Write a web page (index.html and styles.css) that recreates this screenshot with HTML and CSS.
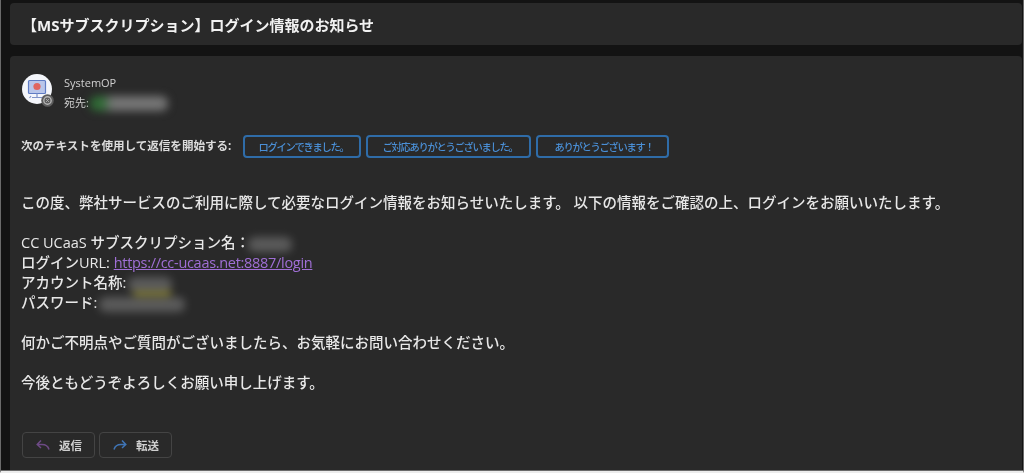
FILE: index.html
```html
<!DOCTYPE html>
<html lang="ja">
<head>
    <meta charset="UTF-8">
    <meta name="viewport" content="width=device-width, initial-scale=1.0">
    <title>ログイン情報のお知らせ</title>
    <link rel="stylesheet" href="styles.css">
</head>
<body>
    <div class="frame">
        <div class="subject-card">
            <h1 class="subject">【MSサブスクリプション】ログイン情報のお知らせ</h1>
        </div>

        <div class="mail-card">
            <div class="sender">
                <div class="avatar">
                    <svg width="30" height="30" viewBox="0 0 30 30">
                        <circle cx="15" cy="15" r="15" fill="#f4f6fb"/>
                        <rect x="6.5" y="6.5" width="17" height="13" rx="1" fill="#b9c6ea" stroke="#5f7cc4" stroke-width="1.2"/>
                        <circle cx="15" cy="12.5" r="3.6" fill="#e0655f"/>
                        <path d="M15 19.5v3.5M10 23.5h10M9 22l-1.5 2M21 22l1.5 2" stroke="#7f93c8" stroke-width="1.2" fill="none"/>
                    </svg>
                    <span class="status-badge">
                        <svg width="13" height="13" viewBox="0 0 12 12">
                            <circle cx="6" cy="6" r="5.8" fill="#5d5d5d"/>
                            <circle cx="6" cy="6" r="3.4" fill="none" stroke="#b4b4b4" stroke-width="1.3"/>
                            <path d="M4.6 4.6l2.8 2.8M7.4 4.6L4.6 7.4" stroke="#b4b4b4" stroke-width=".8"/>
                        </svg>
                    </span>
                </div>
                <div class="sender-text">
                    <div class="sender-name">SystemOP</div>
                    <div class="sender-to">宛先: <span class="redact redact-to"></span></div>
                </div>
            </div>

            <div class="quick-replies">
                <span class="quick-label">次のテキストを使用して返信を開始する:</span>
                <button class="quick-btn btn-a">ログインできました。</button>
                <button class="quick-btn btn-b">ご対応ありがとうございました。</button>
                <button class="quick-btn btn-c">ありがとうございます！</button>
            </div>

            <div class="mail-body">
                <p>この度、弊社サービスのご利用に際して必要なログイン情報をお知らせいたします。 以下の情報をご確認の上、ログインをお願いいたします。</p>
                <p>
                    CC UCaaS サブスクリプション名：<span class="redact redact-plan"></span><br>
                    ログインURL: <a href="#">https://cc-ucaas.net:8887/login</a><br>
                    アカウント名称: <span class="redact redact-account"></span><br>
                    パスワード: <span class="redact redact-pass"></span>
                </p>
                <p>何かご不明点やご質問がございましたら、お気軽にお問い合わせください。</p>
                <p>今後ともどうぞよろしくお願い申し上げます。</p>
            </div>

            <div class="actions">
                <button class="action-btn">
                    <svg width="16" height="14" viewBox="0 0 16 14"><path d="M14 11.5C13 8 10.5 6.5 7 6.5H2.5M6 2.5L2.2 6.5 6 10" fill="none" stroke="#6d4a85" stroke-width="1.5"/></svg>
                    返信
                </button>
                <button class="action-btn">
                    <svg width="16" height="14" viewBox="0 0 16 14"><path d="M2 11.5C3 8 5.5 6.5 9 6.5h4.5M10 2.5l3.8 4L10 10" fill="none" stroke="#3f74b5" stroke-width="1.5"/></svg>
                    転送
                </button>
            </div>
        </div>
    </div>
</body>
</html>
```

FILE: styles.css
```css
html, body {
    margin: 0;
    height: 100%;
    overflow: hidden;
}

body {
    background: #131313;
    border-left: 1px solid #6a6a6a;
    border-right: 1px solid #6a6a6a;
    border-bottom: 2px solid #ececec;
    box-sizing: border-box;
    font-family: "Open Sans", "Noto Sans CJK JP", sans-serif;
    color: #e4e4e4;
}

.frame {
    height: 100%;
    padding: 3px 1px 0 9px;
    box-sizing: border-box;
    display: flex;
    flex-direction: column;
    gap: 11px;
    border-bottom: 1px solid #6a6a6a;
    filter: blur(0.4px);
}

/* Subject */
.subject-card {
    height: 42px;
    flex: none;
    background: #292929;
    border-radius: 4px;
    display: flex;
    align-items: center;
    padding-left: 12px;
}

.subject {
    margin: 0;
    font-size: 15px;
    font-weight: 700;
    color: #f2f2f2;
    white-space: nowrap;
}

/* Mail card */
.mail-card {
    flex: 1;
    background: #292929;
    border-radius: 4px 4px 0 0;
    padding: 18px 12px 0;
}

.sender {
    display: flex;
    gap: 12px;
}

.avatar {
    position: relative;
    width: 30px;
    height: 30px;
}

.avatar svg {
    display: block;
}

.status-badge {
    position: absolute;
    right: -2px;
    bottom: -3px;
}

.sender-text {
    font-size: 11px;
    line-height: 20px;
    color: #d0d0d0;
    margin-top: -1px;
}

.sender-to {
    display: flex;
    align-items: center;
    gap: 1px;
}

.redact {
    display: inline-block;
    height: 15px;
    background: #757575;
    border-radius: 7px;
    filter: blur(4px);
    vertical-align: middle;
}

.redact-to {
    width: 78px;
    background: linear-gradient(90deg, #2f6b35 0 15%, #757575 28% 100%);
}

.redact-plan {
    width: 44px;
    margin-left: -2px;
    opacity: 0.65;
}

.redact-account {
    width: 44px;
    margin-left: -2px;
    opacity: 0.65;
    box-shadow: 2px 9px 0 -3px #b3a71c;
}

.redact-pass {
    width: 86px;
    margin-left: -2px;
    opacity: 0.65;
}

/* Quick replies */
.quick-replies {
    display: flex;
    align-items: center;
    margin-top: 22px;
    gap: 5px;
}

.quick-label {
    font-size: 11.6px;
    font-weight: 700;
    letter-spacing: -0.05px;
    color: #dcdcdc;
    width: 216px;
    flex: none;
    margin-left: -1px;
    margin-right: 1px;
    padding-bottom: 3px;
    white-space: nowrap;
}

.quick-btn {
    height: 23px;
    padding: 0 0 0 3px;
    background: transparent;
    border: 2px solid #2f6ca8;
    border-radius: 4px;
    font-family: inherit;
    font-size: 10.3px;
    font-weight: 500;
    letter-spacing: -1.3px;
    color: #4a8fd6;
}

.btn-a { width: 118px; }
.btn-b { width: 165px; }
.btn-c { width: 133px; }

/* Body text */
.mail-body {
    margin-top: 35px;
    font-size: 14.5px;
    font-weight: 500;
    line-height: 20px;
    color: #e8e8e8;
}

.mail-body p {
    margin: 0 0 20px -1px;
    white-space: nowrap;
}

.mail-body a {
    color: #a06fd6;
    letter-spacing: -0.3px;
}

/* Bottom buttons */
.actions {
    display: flex;
    gap: 4px;
    margin-top: 39px;
}

.action-btn {
    width: 73px;
    height: 26px;
    padding: 0;
    display: flex;
    align-items: center;
    justify-content: center;
    gap: 8px;
    background: transparent;
    border: 1px solid #444;
    border-radius: 4px;
    font-family: inherit;
    font-size: 11.5px;
    font-weight: 700;
    color: #cfcfcf;
}
```
